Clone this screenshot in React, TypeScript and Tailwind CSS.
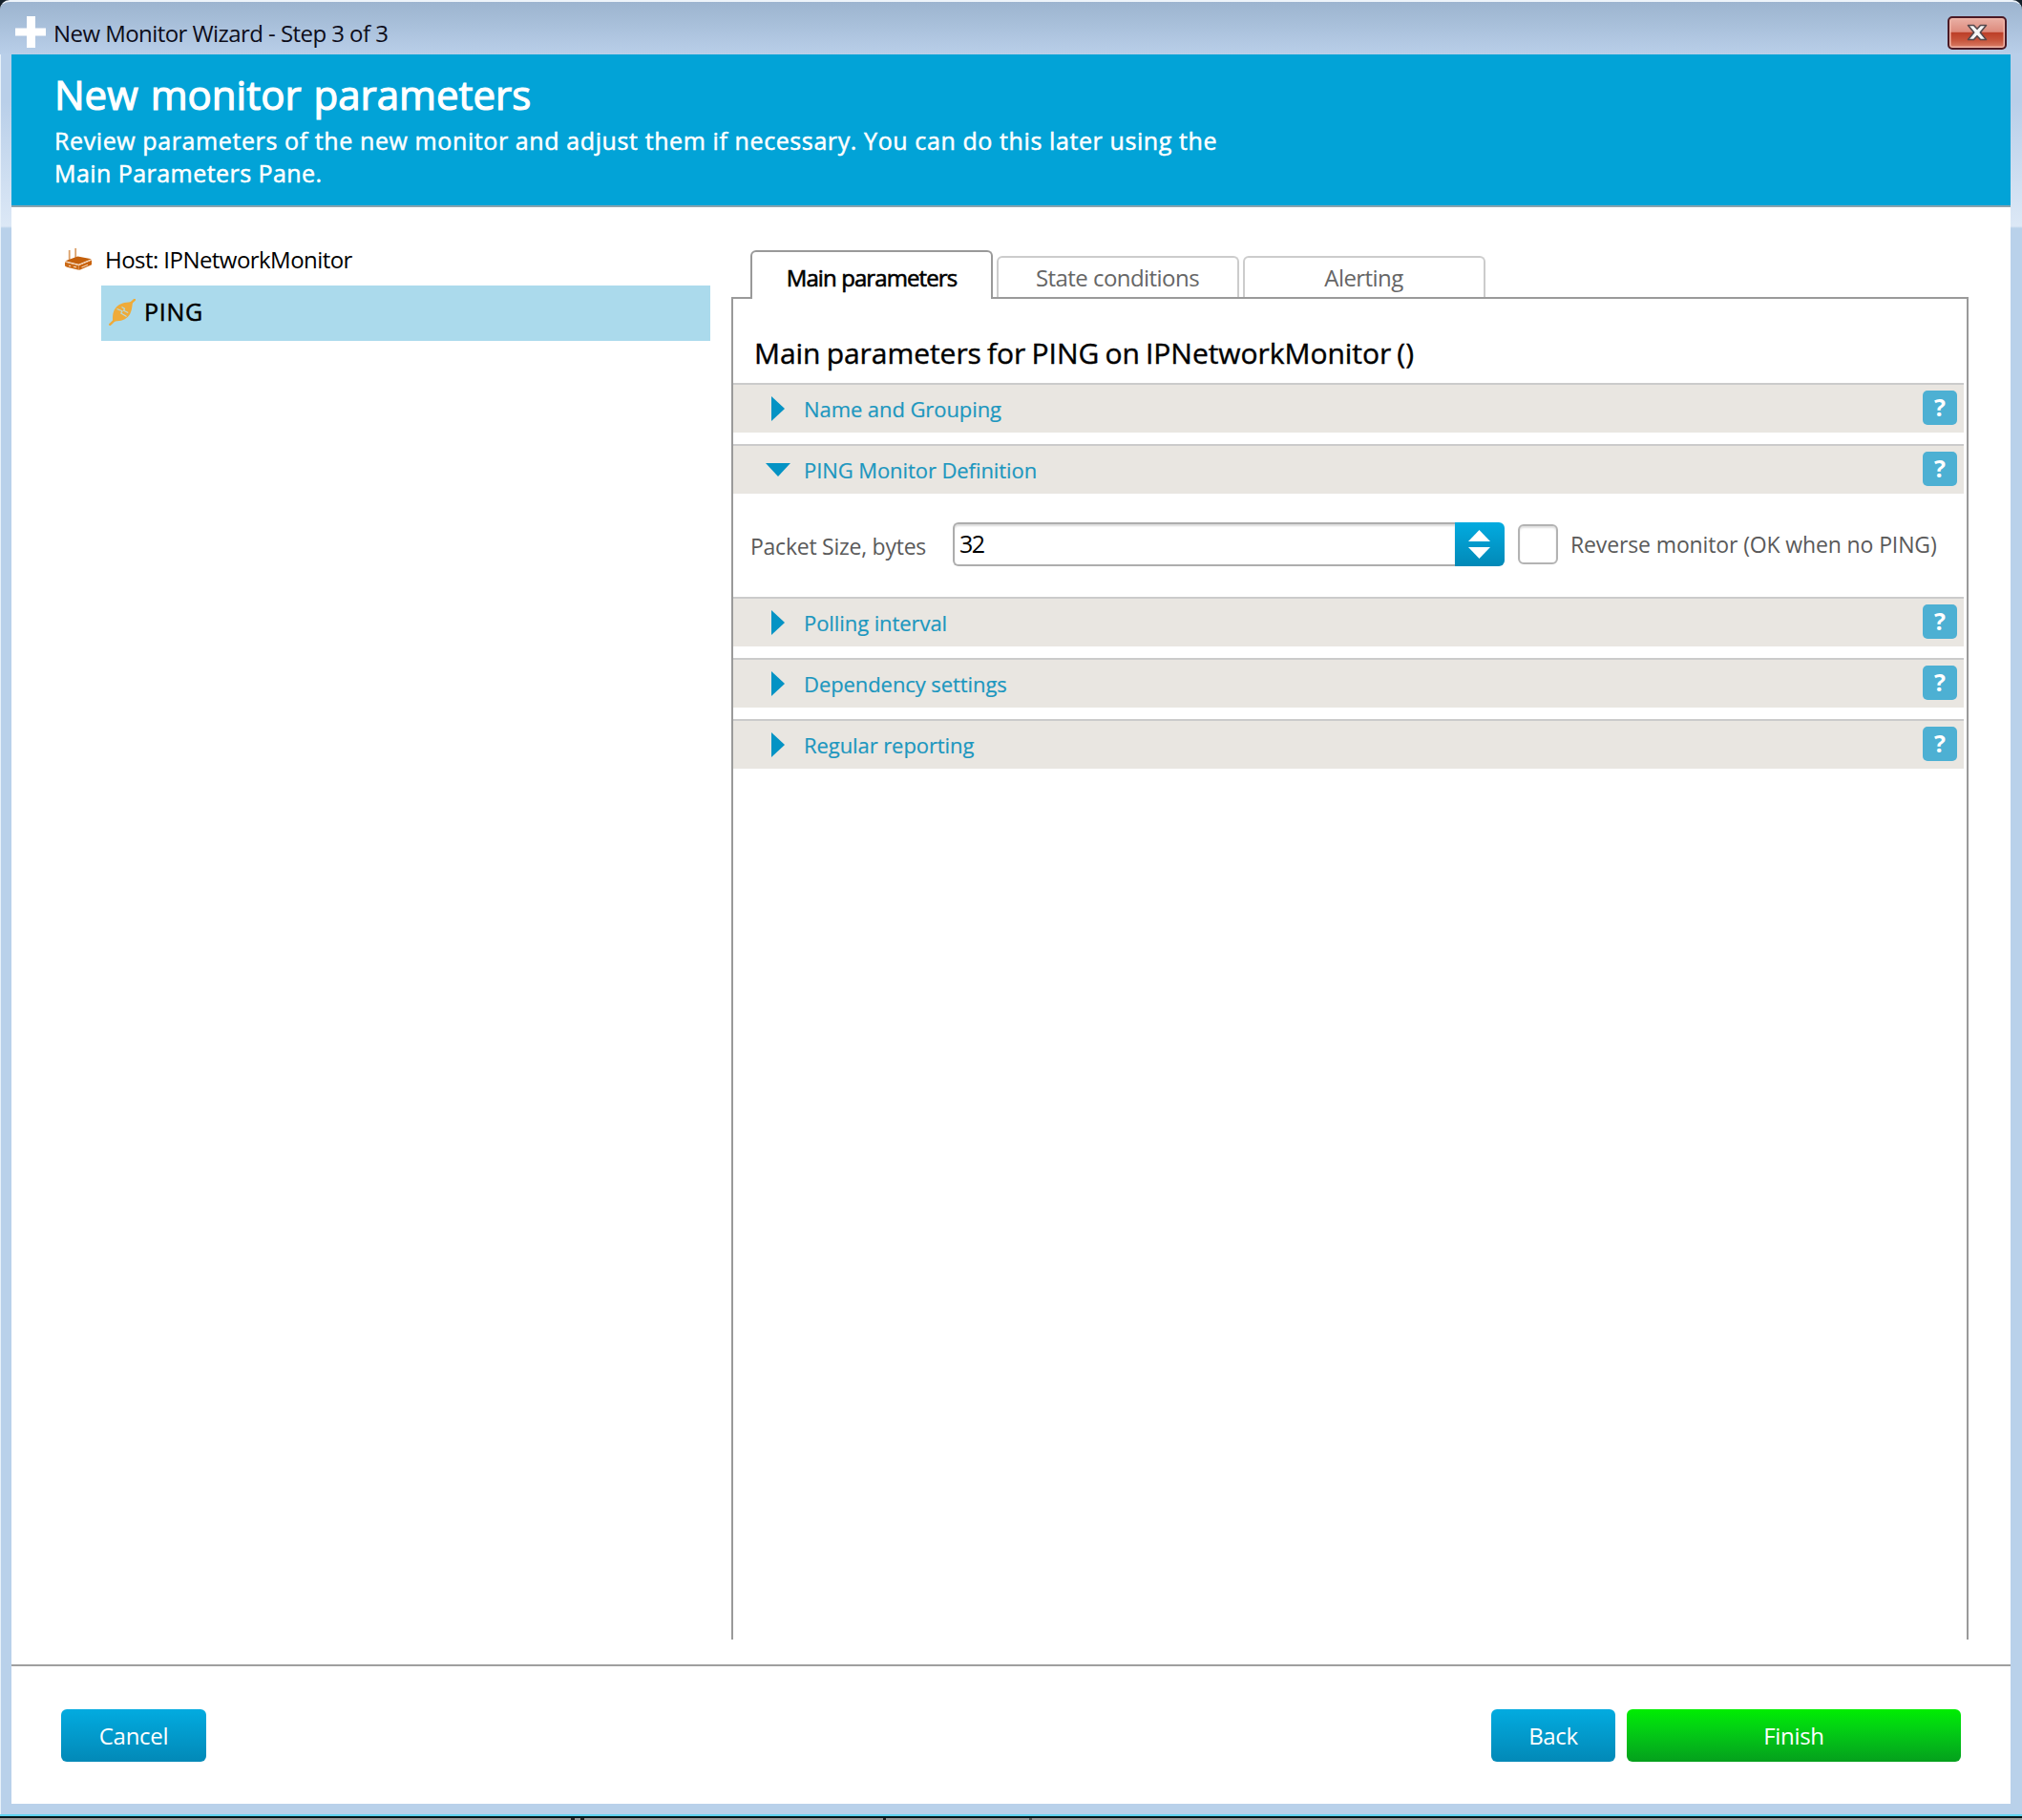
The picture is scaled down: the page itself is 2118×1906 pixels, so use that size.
import type { ReactNode } from "react";

const tabs = [
  { label: "Main parameters", active: true },
  { label: "State conditions", active: false },
  { label: "Alerting", active: false },
];

const sections = [
  { title: "Name and Grouping", open: false },
  { title: "PING Monitor Definition", open: true },
  { title: "Polling interval", open: false },
  { title: "Dependency settings", open: false },
  { title: "Regular reporting", open: false },
];

function RouterIcon() {
  return (
    <svg viewBox="0 0 28 22" className="h-[22px] w-7 shrink-0 overflow-visible" aria-hidden>
      <path d="M4.7 1v11M11.2 -1v11" stroke="#dba069" strokeWidth="1.8" fill="none" />
      <path d="M0 13.2 14.5 17v4.8L2 18.8 0 17.4z" fill="#cb6a17" />
      <path d="M14.5 17 28 11.5v4.7l-12 5.2-1.5.4z" fill="#c9620d" />
      <path d="M.4 12.2 13.4 7.5 27.8 10.3 14.4 15.8z" fill="#c4600c" />
      <path d="M.2 13.2 14.4 16.7 28 11.2" stroke="#f0c49c" strokeWidth="1" fill="none" />
      <path d="M4 17.2l2 .4M9 18.3l3 .6M17.5 18.9l6.5-2.6" stroke="#f3d3b4" strokeWidth="1.1" />
    </svg>
  );
}

function PlugIcon() {
  return (
    <svg viewBox="0 0 28 28" className="size-7 shrink-0" aria-hidden>
      <path d="M1.2 26.8 7 21.4M21 6.4l6-5.6" stroke="#efab3a" strokeWidth="2.4" strokeLinecap="round" />
      <path d="M4.2 23.6C3.4 15 5.6 10 9.6 7 13.5 4 19 3.6 25 3c-.8 6.6-1.2 12-5 15.8-4 4-9.5 4.8-15.8 4.8z" fill="#efab3a" />
      <path d="M8.5 10.5l5.5 2.3-1.2 2.3 5.8 3.4M13.5 8.5l3 1.7-.8 2 4.5 2.3" stroke="#b5dbe0" strokeWidth="1.2" fill="none" />
    </svg>
  );
}

function CloseButton() {
  return (
    <button
      aria-label="Close"
      className="flex h-[35px] w-[62px] items-center justify-center rounded-[5px] border-2 border-[#4a1a25] bg-[linear-gradient(#eab0a5_0%,#dd8b7d_46%,#bd3f28_50%,#c7553c_75%,#db8068_100%)] shadow-[inset_0_0_0_1.5px_#f0b5a8]"
    >
      <svg viewBox="0 0 22 18" className="h-[18px] w-[22px]" aria-hidden>
        <path
          d="M1.5 1.5h6L11 5.3l3.5-3.8h6L14.3 9l6.2 7.5h-6L11 12.7l-3.5 3.8h-6L7.7 9z"
          fill="#f6f6f6"
          stroke="#55484c"
          strokeWidth="1.6"
          strokeLinejoin="round"
        />
      </svg>
    </button>
  );
}

function TitleBar() {
  return (
    <div className="flex h-[57px] shrink-0 items-center rounded-t-[10px] border-t-2 border-[#eef4fa] bg-linear-to-b from-[#9cb4cf] to-[#b9cfe9] pr-4 pl-4">
      <svg viewBox="0 0 32 33" className="mt-[7px] h-[33px] w-8 shrink-0" aria-hidden>
        <path d="M12 0h9v12.5h11v8H21V33h-9V20.5H0v-8h12z" fill="#fff" />
      </svg>
      <span className="ml-2 pt-[10px] text-2xl leading-[32px] tracking-[-0.56px] text-[#0d0d1a]">
        New Monitor Wizard - Step 3 of 3
      </span>
      <div className="ml-auto pt-[9px]">
        <CloseButton />
      </div>
    </div>
  );
}

function Header() {
  return (
    <header className="h-[160px] shrink-0 border-b-2 border-[#8aa3ae] bg-[#02a3d7] pt-3 pl-[45px] text-white">
      <h1 className="text-[42px] leading-[60px] [word-spacing:2px] [-webkit-text-stroke:1.2px_currentColor]">
        New monitor parameters
      </h1>
      <p className="mt-px w-[1240px] text-[25px] leading-[34px] tracking-[0.6px] [-webkit-text-stroke:0.5px_currentColor]">
        Review parameters of the new monitor and adjust them if necessary. You can do this later using the
        <br />
        <span className="tracking-[0.45px]">Main Parameters Pane.</span>
      </p>
    </header>
  );
}

function HostTree() {
  return (
    <aside className="w-[732px] shrink-0 pt-[38px] pl-[56px]">
      <div className="flex h-[34px] items-center">
        <RouterIcon />
        <span className="ml-[14px] text-2xl tracking-[-0.55px] text-black">Host: IPNetworkMonitor</span>
      </div>
      <div className="mt-[10px] ml-[38px] flex h-[58px] items-center bg-[#abdaec] pb-[3px] pl-2">
        <PlugIcon />
        <span className="ml-[9px] text-[25px] tracking-[0.7px] text-black [-webkit-text-stroke:0.5px_currentColor]">
          PING
        </span>
      </div>
    </aside>
  );
}

function Tabs() {
  return (
    <div className="relative z-10 -mb-[2px] flex h-[51px] items-end gap-1 pl-5">
      {tabs.map((tab) =>
        tab.active ? (
          <div
            key={tab.label}
            className="flex h-[51px] w-[254px] items-center justify-center rounded-t-md border-2 border-b-0 border-[#999] bg-white pt-[4px] text-2xl tracking-[-0.9px] text-black [-webkit-text-stroke:0.6px_currentColor]"
          >
            {tab.label}
          </div>
        ) : (
          <div
            key={tab.label}
            className="mb-[2px] flex h-[43px] w-[254px] items-center justify-center rounded-t-md border-2 border-b-0 border-[#ccc] bg-white pr-px text-2xl tracking-[-0.55px] text-[#666]"
          >
            {tab.label}
          </div>
        ),
      )}
    </div>
  );
}

function SectionBar({ title, open }: { title: string; open: boolean }) {
  return (
    <div className="flex h-[52px] items-center border-t-2 border-[#cbcbcb] bg-[#e9e6e1] pr-[7px]">
      <div className="flex w-[74px] shrink-0 justify-center pl-5">
        {open ? (
          <svg viewBox="0 0 26 14" className="h-[14px] w-[26px]" aria-hidden>
            <path d="M0 0h26L13 14z" fill="#0493c4" />
          </svg>
        ) : (
          <svg viewBox="0 0 14 26" className="h-[26px] w-[14px]" aria-hidden>
            <path d="M0 0v26l14-13z" fill="#0493c4" />
          </svg>
        )}
      </div>
      <span className="text-[22px] tracking-[-0.08px] text-[#1c97bf] [-webkit-text-stroke:0.2px_currentColor]">
        {title}
      </span>
      <button
        aria-label={`Help: ${title}`}
        className="mb-[2px] ml-auto flex size-9 items-center justify-center rounded-[5px] bg-[#4db0d3] text-[25px] font-bold text-white"
      >
        ?
      </button>
    </div>
  );
}

function PingDefinition() {
  return (
    <div className="flex h-[108px] items-center pb-[2px] pl-[18px]">
      <label className="w-[212px] shrink-0 pt-1 text-[23px] tracking-[-0.25px] text-[#5a5a5a]">Packet Size, bytes</label>
      <div className="flex h-[46px] w-[578px]">
        <div className="flex flex-1 items-center rounded-l-md border-2 border-r-0 border-[#adadad] bg-white pl-[5px] text-[25px] tracking-[-1.5px] text-black shadow-[inset_0_2px_2px_#dcdcdc]">
          32
        </div>
        <button
          aria-label="Change packet size"
          className="flex w-[52px] flex-col items-center justify-center gap-[6px] rounded-r-md bg-linear-to-b from-[#02abe0] to-[#0289b7] pr-[2px]"
        >
          <svg viewBox="0 0 23 12" className="h-3 w-[23px]" aria-hidden>
            <path d="M0 12h23L11.5 0z" fill="#fff" />
          </svg>
          <svg viewBox="0 0 23 12" className="h-3 w-[23px]" aria-hidden>
            <path d="M0 0h23L11.5 12z" fill="#fff" />
          </svg>
        </button>
      </div>
      <div className="ml-[14px] size-[42px] rounded-md border-2 border-[#b3b3b3] bg-white shadow-[inset_0_2px_2px_#e0e0e0]" />
      <span className="ml-[13px] pt-px text-[23px] tracking-[-0.13px] text-[#5a5a5a]">
        Reverse monitor (OK when no PING)
      </span>
    </div>
  );
}

function ParametersPane() {
  return (
    <section className="ml-[22px] flex w-[1296px] flex-col pt-[45px] pb-[26px]">
      <Tabs />
      <div className="flex-1 border-2 border-b-0 border-[#9a9a9a] pr-[3px]">
        <h2 className="h-[88px] pt-[25px] pl-[22px] text-[30px] leading-[64px] tracking-[-0.05px] text-black [word-spacing:-1.5px] [-webkit-text-stroke:0.4px_currentColor]">
          Main parameters for PING on IPNetworkMonitor ()
        </h2>
        {sections.map((section) => (
          <div key={section.title} className={section.open ? "" : "mb-3"}>
            <SectionBar title={section.title} open={section.open} />
            {section.open && <PingDefinition />}
          </div>
        ))}
      </div>
    </section>
  );
}

function Button({ className, children }: { className: string; children: ReactNode }) {
  return (
    <button className={`h-[55px] rounded-md text-2xl tracking-[-0.3px] text-white ${className}`}>
      {children}
    </button>
  );
}

function Footer() {
  const blue = "bg-linear-to-b from-[#02abe0] to-[#0289b7]";
  return (
    <footer className="flex h-[146px] shrink-0 items-start border-t-2 border-[#9f9f9f] pt-[45px] pr-[52px] pl-[52px]">
      <Button className={`w-[152px] ${blue}`}>Cancel</Button>
      <Button className={`ml-auto w-[130px] ${blue}`}>Back</Button>
      <Button className="ml-3 w-[350px] bg-linear-to-b from-[#00ee00] to-[#04a01c]">Finish</Button>
    </footer>
  );
}

export default function App() {
  return (
    <div className="flex h-[1906px] w-[2118px] flex-col overflow-hidden bg-[#14202a] font-['Open_Sans','Noto_Sans',sans-serif]">
      <TitleBar />
      {/* Window frame: the glassy sheen on the side borders stops at 238px */}
      <div className="flex h-[1843px] shrink-0 flex-col border-l border-[#e8f1fa] bg-[linear-gradient(#b9cfe9_0px,#b9cfe9_50px,#dce8f6_180px,#b9d1ea_182px)] pr-3 pb-[11px] pl-[11px]">
        <div className="flex flex-1 flex-col bg-white">
          <Header />
          <main className="flex flex-1">
            <HostTree />
            <ParametersPane />
          </main>
          <Footer />
        </div>
      </div>
      <div className="h-[2px] shrink-0 bg-[#5fd4f0]" />
      <div className="h-[2px] shrink-0 bg-[#04181c]" />
      <div className="flex h-[2px] shrink-0 bg-[#9a9a9a]">
        <span className="ml-[598px] w-1 bg-[#222]" />
        <span className="ml-[6px] w-1 bg-[#222]" />
        <span className="ml-[313px] w-[3px] bg-[#222]" />
        <span className="ml-[150px] w-[3px] bg-[#555]" />
      </div>
    </div>
  );
}
